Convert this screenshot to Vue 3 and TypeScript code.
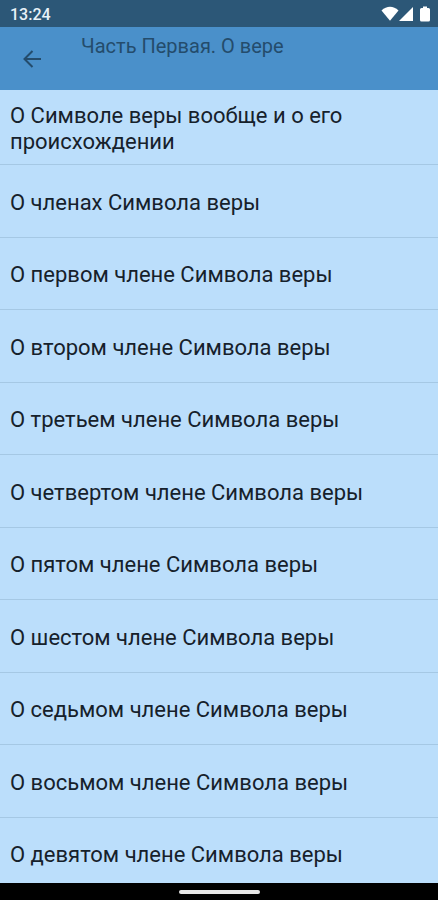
<script setup lang="ts">
import { ref } from 'vue'

const title = 'Часть Первая. О вере'
const chapters: string[] = [
  'О Символе веры вообще и о его происхождении',
  'О членах Символа веры',
  'О первом члене Символа веры',
  'О втором члене Символа веры',
  'О третьем члене Символа веры',
  'О четвертом члене Символа веры',
  'О пятом члене Символа веры',
  'О шестом члене Символа веры',
  'О седьмом члене Символа веры',
  'О восьмом члене Символа веры',
  'О девятом члене Символа веры',
]
const selected = ref<number | null>(null)
</script>

<template>
  <div class="screen">
    <div class="status">
      <span>13:24</span>
      <div class="status-icons">
        <svg class="wifi" viewBox="0 0 18 16" aria-hidden="true">
          <path d="M0.500 4.500Q4.500 0.800 9 0.800T17.500 4.500L9 14.800Z" />
        </svg>
        <svg class="signal" viewBox="0 0 14 16" aria-hidden="true">
          <path d="M14 1V15H0Z" />
        </svg>
        <svg class="battery" viewBox="0 0 10 16" aria-hidden="true">
          <path d="M3 0.500H7V2H8.500Q10 2 10 3.500V14Q10 15.500 8.500 15.500H1.500Q0 15.500 0 14V3.500Q0 2 1.500 2H3Z" />
        </svg>
      </div>
    </div>
    <header class="toolbar">
      <button class="back" type="button" aria-label="Назад">
        <svg viewBox="0 0 20 20" aria-hidden="true">
          <path d="M19 10H2.500M10.500 2L2.500 10L10.500 18" />
        </svg>
      </button>
      <h1>{{ title }}</h1>
    </header>
    <main class="content">
      <ul class="chapters">
        <li v-for="(chapter, i) in chapters" :key="chapter">
          <button type="button" @click="selected = i">{{ chapter }}</button>
        </li>
      </ul>
    </main>
    <div class="navbar"><div class="handle"></div></div>
  </div>
</template>

<style>
body {
  margin: 0;
}
</style>

<style scoped>
.screen {
  display: flex;
  flex-direction: column;
  height: 100vh;
  background: #bbdefb;
  color: #16212b;
  font-family: Roboto, "Noto Sans", sans-serif;
}
.status {
  display: flex;
  flex: none;
  align-items: center;
  justify-content: space-between;
  box-sizing: border-box;
  height: 27px;
  padding: 1px 8px 0 10px;
  background: #2c5777;
  color: #e8f1f8;
  font-size: 16px;
  font-weight: 500;
}
.status-icons {
  display: flex;
  align-items: center;
}
.status-icons svg {
  height: 16px;
  fill: #fff;
}
.wifi {
  width: 18px;
}
.signal {
  width: 14px;
  margin-right: 7px;
}
.battery {
  width: 10px;
}
.toolbar {
  display: flex;
  flex: none;
  align-items: center;
  height: 63px;
  background: #4a90ca;
}
.back {
  display: flex;
  align-items: center;
  justify-content: center;
  width: 64px;
  height: 100%;
  padding: 0;
  border: 0;
  background: none;
}
.back svg {
  width: 20px;
  height: 20px;
  fill: none;
  stroke: #244c6c;
  stroke-width: 2;
}
h1 {
  align-self: flex-start;
  margin: 6px 0 0 17px;
  color: #244c6c;
  font-size: 20px;
  font-weight: 400;
  line-height: 26px;
}
.content {
  display: flex;
  flex: 1;
  flex-direction: column;
  min-height: 0;
  overflow: hidden;
}
.chapters {
  display: flex;
  flex: 1;
  flex-direction: column;
  margin: 0 0 -7px;
  padding: 0;
  list-style: none;
}
li {
  display: flex;
  flex: 1 0 0;
  border-bottom: 1px solid #a5c8e4;
}
li:first-child {
  flex: none;
}
li button {
  width: 100%;
  padding: 13px 10px 9px;
  border: 0;
  background: none;
  color: inherit;
  font: inherit;
  font-size: 22px;
  line-height: 26px;
  text-align: left;
}
.navbar {
  display: flex;
  flex: none;
  align-items: center;
  justify-content: center;
  height: 17px;
  background: #000;
}
.handle {
  width: 81px;
  height: 4px;
  border-radius: 2px;
  background: #e8e8e8;
}
</style>
